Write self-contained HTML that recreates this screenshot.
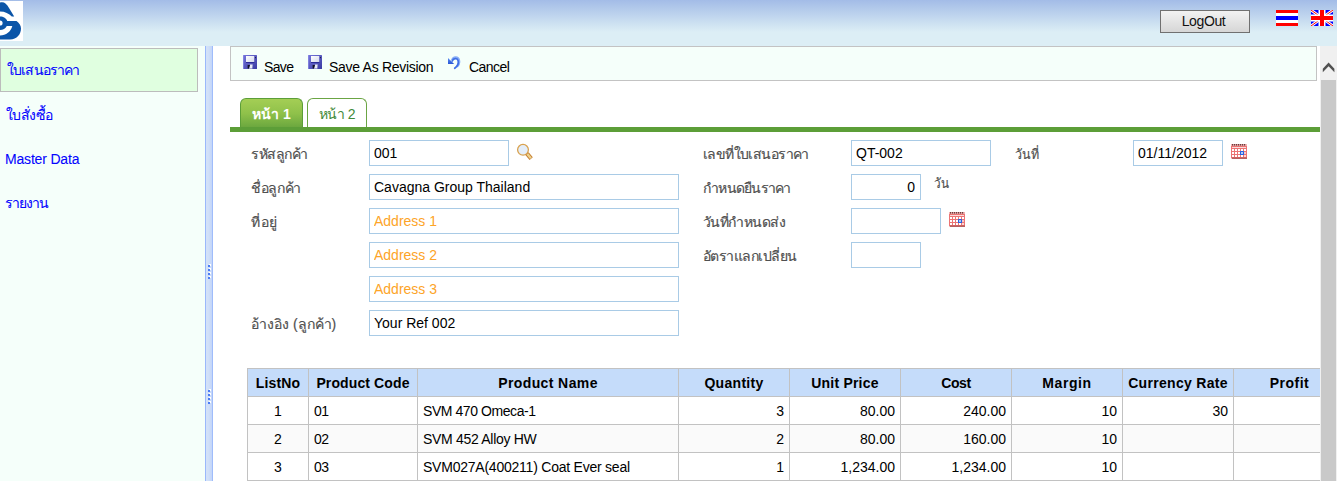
<!DOCTYPE html>
<html lang="th">
<head>
<meta charset="utf-8">
<title>Quotation</title>
<style>
*{box-sizing:border-box;margin:0;padding:0}
html,body{width:1337px;height:481px;overflow:hidden;background:#fff}
body{position:relative;font-family:"Liberation Sans",sans-serif;font-size:14px;color:#000}
.abs{position:absolute}
a{text-decoration:none;display:block}
#hdr{left:0;top:0;width:1337px;height:46px;background:linear-gradient(#a3bce7 0,#dceef5 32px,#dceef5 100%)}
#logo{left:0;top:1px;width:23px;height:40px;background:#fff}
#side{left:0;top:46px;width:205px;height:435px;background:#f5fffa}
.mi{left:0;width:198px;height:44px;line-height:44px;padding-left:6px;color:#0505ff;-webkit-text-stroke:.08px #0505ff;font-size:14px;white-space:nowrap}
.mi.sel{background:#e0ffe0;border:1px solid #bcbcbc;line-height:42px;padding-left:6px}
#split{left:205px;top:46px;width:8px;height:435px;background:linear-gradient(90deg,#9ab8fb 0,#9ab8fb 1px,#d4e2f8 1px,#d0dff8 3.5px,#c2d5f9 7px,#9fbcfb 7px,#9fbcfb 8px)}
.grip{left:208px;width:3px;height:15px}
#tb{left:230px;top:46px;width:1087px;height:35px;background:#f5fffa;border:1px solid #c3c3c3}
.tbt{top:58px;height:18px;line-height:18px;font-size:14px;white-space:nowrap;color:#000}
#btn{left:1160px;top:10px;width:90px;height:23px;padding:0 3px 2px 0;margin:0;border-radius:0;font-family:"Liberation Sans",sans-serif;border:1px solid #707070;background:linear-gradient(#f2f2f2,#d6d6d6);text-align:center;font-size:14px;letter-spacing:-.4px;line-height:20px;color:#111}
#tab1{left:240px;top:98px;width:63px;height:30px;border-radius:6px 6px 0 0;background:linear-gradient(#a4ce55 0,#8fc14a 50%,#69a63e 100%);border:1px solid #5c9e38;border-bottom:0;color:#fff;font-weight:bold;text-align:center;font-size:14px;line-height:30px;white-space:nowrap}
#tab2{left:307px;top:98px;width:60px;height:30px;border-radius:6px 6px 0 0;background:#fff;border:1px solid #6ba544;border-bottom:0;color:#3f8a3a;text-align:center;font-size:14px;line-height:30px;white-space:nowrap}
#gline{left:230px;top:127px;width:1090px;height:5px;background:#5c9e38}
.lbl{height:26px;line-height:29px;font-size:14px;color:#505050;-webkit-text-stroke:.18px #505050;white-space:nowrap}
.inp{height:26px;border:1px solid #a9cbe6;border-radius:0;outline:0;margin:0;background:#fff;font-family:"Liberation Sans",sans-serif;font-size:14px;line-height:normal;padding:0 4px 0 4px;color:#000;-webkit-appearance:none;appearance:none}
.inp::placeholder{color:#fda428;opacity:1}
.r{text-align:right;padding-right:5px}
#grid{left:247px;top:368px;width:1098px;border-collapse:collapse;table-layout:fixed;font-size:14px}
#grid th,#grid td{border:1px solid #c2c2c2;height:28px;padding:0 5px;white-space:nowrap;overflow:hidden}
#grid th{background:#c5dcfa;font-weight:bold;text-align:center;padding:0}
#grid tr.alt td{background:#fafafa}
#grid td.c{text-align:center}
#grid td.k{letter-spacing:-.6px}
#grid td.n{text-align:right}
#sb{left:1320px;top:46px;width:17px;height:435px;background:#f0f0f0}
#thumb{left:1321px;top:80px;width:15px;height:401px;background:#c9c9c9}
</style>
</head>
<body>
<div id="hdr" class="abs"></div>
<div id="logo" class="abs">
<svg width="23" height="40" viewBox="0 1 23 40"><g fill="#0b55a8"><path d="M0,2.6 C3.5,1.4 6.5,3.2 9,8 L14.2,16.6 L11.8,16.6 C9,13.6 5,11.6 0,11.6 Z"/><path d="M0,16.5 C3.5,16.5 6.5,18.5 7.2,21 L16.5,21 C19,22.5 21,25.5 21,28.5 C21,34 17,39.5 10,39.5 L0,39.5 L0,35.5 C6,35.5 11,31.5 12.3,26 L6.8,26 C5.5,28.5 3,30 0,30 Z"/></g><circle cx="0" cy="23" r="2.6" fill="#fff"/></svg>
</div>

<div id="side" class="abs"></div>
<a href="#" id="m1" class="abs mi sel" style="top:48px;letter-spacing:-0.85px">ใบเสนอราคา</a>
<a href="#" id="m2" class="abs mi" style="top:93px;letter-spacing:-0.54px">ใบสั่งซื้อ</a>
<a href="#" id="m3" class="abs mi" style="top:137px;padding-left:5px;letter-spacing:-0.18px">Master Data</a>
<a href="#" id="m4" class="abs mi" style="top:181px;padding-left:5px;letter-spacing:-1.06px">รายงาน</a>

<div id="split" class="abs"></div>
<svg class="abs grip" style="top:264px" viewBox="0 0 3 15"><g fill="#fff"><rect x="1" y="0" width="2" height="2"/><rect x="1" y="4" width="2" height="2"/><rect x="1" y="8" width="2" height="2"/><rect x="1" y="12" width="2" height="2"/></g><g fill="#4a7cf5"><rect x="0" y="1" width="2" height="2"/><rect x="0" y="5" width="2" height="2"/><rect x="0" y="9" width="2" height="2"/><rect x="0" y="13" width="2" height="2"/></g></svg>
<svg class="abs grip" style="top:389px" viewBox="0 0 3 15"><g fill="#fff"><rect x="1" y="0" width="2" height="2"/><rect x="1" y="4" width="2" height="2"/><rect x="1" y="8" width="2" height="2"/><rect x="1" y="12" width="2" height="2"/></g><g fill="#4a7cf5"><rect x="0" y="1" width="2" height="2"/><rect x="0" y="5" width="2" height="2"/><rect x="0" y="9" width="2" height="2"/><rect x="0" y="13" width="2" height="2"/></g></svg>

<button id="btn" class="abs" type="button">LogOut</button>
<svg class="abs" style="left:1276px;top:10px" width="22" height="16" viewBox="0 0 22 16"><rect width="22" height="16" fill="#fff"/><rect width="22" height="3" fill="#f00"/><rect y="6" width="22" height="4" fill="#00f"/><rect y="13" width="22" height="3" fill="#f00"/></svg>
<svg class="abs" style="left:1311px;top:10px" width="22" height="16" viewBox="0 0 22 16"><rect width="22" height="16" fill="#00f"/><path d="M0,0 L22,16 M22,0 L0,16" stroke="#fff" stroke-width="2.7"/><path d="M0,0 L22,16 M22,0 L0,16" stroke="#f00" stroke-width="1"/><path d="M11,0 V16 M0,8 H22" stroke="#fff" stroke-width="7"/><path d="M11,0 V16 M0,8 H22" stroke="#f00" stroke-width="4"/></svg>

<div id="tb" class="abs"></div>
<svg class="abs ico-save" style="left:243px;top:55px" width="14" height="14" viewBox="0 0 14 14"><defs><linearGradient id="fg" x1="0" y1="0" x2="1" y2="1"><stop offset="0" stop-color="#7676dc"/><stop offset="1" stop-color="#3a3aa2"/></linearGradient><linearGradient id="fw" x1="0" y1="0" x2="1" y2="1"><stop offset="0" stop-color="#fff"/><stop offset="1" stop-color="#d4d8ec"/></linearGradient></defs><rect width="14" height="14" rx=".6" fill="url(#fg)"/><rect x="0" y="0" width="1" height="14" fill="#8c8ce6" opacity=".7"/><rect x="3" y="7" width="8.4" height="1" fill="#2c2c98"/><rect x="3" y="1" width="8.2" height="6" fill="url(#fw)"/><rect x="4.2" y="9.2" width="5.8" height="4.8" fill="#5a5ab4"/><polygon points="7,9.6 9.6,9.6 9.2,13.4 6,13.4" fill="#e8eaf6"/><polygon points="4.6,10 7,10 6,13.4 4.6,13.4" fill="#101028"/><rect x="12" y="2" width="1" height="1.2" fill="#22224a"/></svg>
<a href="#" id="t1" class="abs tbt" style="left:264px;letter-spacing:-0.64px">Save</a>
<svg class="abs ico-save" style="left:308px;top:55px" width="14" height="14" viewBox="0 0 14 14"><rect width="14" height="14" rx=".6" fill="url(#fg)"/><rect x="0" y="0" width="1" height="14" fill="#8c8ce6" opacity=".7"/><rect x="3" y="7" width="8.4" height="1" fill="#2c2c98"/><rect x="3" y="1" width="8.2" height="6" fill="url(#fw)"/><rect x="4.2" y="9.2" width="5.8" height="4.8" fill="#5a5ab4"/><polygon points="7,9.6 9.6,9.6 9.2,13.4 6,13.4" fill="#e8eaf6"/><polygon points="4.6,10 7,10 6,13.4 4.6,13.4" fill="#101028"/><rect x="12" y="2" width="1" height="1.2" fill="#22224a"/></svg>
<a href="#" id="t2" class="abs tbt" style="left:329px;letter-spacing:-0.29px">Save As Revision</a>
<svg class="abs" style="left:447px;top:55px" width="14" height="15" viewBox="447 55 14 15"><defs><linearGradient id="ug" x1="0" y1="0" x2="0" y2="1"><stop offset="0" stop-color="#5f8ef2"/><stop offset="1" stop-color="#2857d6"/></linearGradient></defs><polygon points="448,58 448,63.9 454.2,63.9" fill="url(#ug)"/><path d="M452,60.4 C453.2,56.8 458,56.2 459,60.2 C459.7,63 458.6,65.2 457,66.8" fill="none" stroke="#86acf6" stroke-width="2.2"/><path d="M452.2,61 C453.4,58 457.4,57.6 458.1,60.6 C458.9,63.8 457,66.6 454.7,68.3" fill="none" stroke="#3f6fe6" stroke-width="1.7" stroke-linecap="round"/></svg>
<a href="#" id="t3" class="abs tbt" style="left:469px;letter-spacing:-0.54px">Cancel</a>

<a href="#" id="tab1" class="abs">หน้า 1</a>
<a href="#" id="tab2" class="abs" style="letter-spacing:-0.56px">หน้า 2</a>
<div id="gline" class="abs"></div>

<label id="l1" class="abs lbl" style="left:251px;top:140px;letter-spacing:-0.43px">รหัสลูกค้า</label>
<input type="text" class="abs inp" style="left:369px;top:140px;width:140px" value="001">
<svg class="abs" style="left:516px;top:143px" width="17" height="18" viewBox="516 143 17 18"><circle cx="523" cy="149.8" r="5.4" fill="#e4eefa" stroke="#d9a24f" stroke-width="1.3"/><path d="M527,153.6 L531.2,158.6" stroke="#c47a2c" stroke-width="4.2" stroke-linecap="butt"/><path d="M527.3,154 L530.9,158.2" stroke="#ecd28e" stroke-width="2.4"/></svg>

<label id="l2" class="abs lbl" style="left:251px;top:174px;letter-spacing:-0.34px">ชื่อลูกค้า</label>
<input type="text" class="abs inp" style="left:369px;top:174px;width:310px" value="Cavagna Group Thailand">
<label id="l3" class="abs lbl" style="left:251px;top:208px;letter-spacing:0.6px">ที่อยู่</label>
<input type="text" class="abs inp" style="left:369px;top:208px;width:310px" placeholder="Address 1">
<input type="text" class="abs inp" style="left:369px;top:242px;width:310px" placeholder="Address 2">
<input type="text" class="abs inp" style="left:369px;top:276px;width:310px" placeholder="Address 3">
<label id="l6" class="abs lbl" style="left:251px;top:310px">อ้างอิง (ลูกค้า)</label>
<input type="text" class="abs inp" style="left:369px;top:310px;width:310px" value="Your Ref 002">

<label id="r1" class="abs lbl" style="left:703px;top:140px;letter-spacing:-0.59px">เลขที่ใบเสนอราคา</label>
<input type="text" class="abs inp" style="left:851px;top:140px;width:140px" value="QT-002">
<label id="wanti" class="abs lbl" style="left:1015px;top:140px;transform-origin:0 50%;transform:scaleX(.89)">วันที่</label>
<input type="text" class="abs inp" style="left:1133px;top:140px;width:90px" value="01/11/2012">
<svg class="abs cal" style="left:1231px;top:144px" width="16" height="15" viewBox="0 0 16 15"><rect x="0" y="1" width="16" height="13.4" fill="#ec7474"/><rect x="1" y="13.6" width="15" height="1.2" fill="#a54a4a"/><rect x="0" y="0" width="16" height="2" fill="#f3b1b1"/><g fill="#6b3c3c"><rect x="1" y="0" width="1.2" height="1.6"/><rect x="3" y="0" width="1.2" height="1.6"/><rect x="5" y="0" width="1.2" height="1.6"/><rect x="7" y="0" width="1.2" height="1.6"/><rect x="9" y="0" width="1.2" height="1.6"/><rect x="11" y="0" width="1.2" height="1.6"/><rect x="13" y="0" width="1.2" height="1.6"/></g><rect x="1" y="3" width="14" height="1" fill="#fbdcdc"/><g fill="#fff"><rect x="1" y="5" width="2" height="2"/><rect x="4" y="5" width="2" height="2"/><rect x="7" y="5" width="2" height="2"/><rect x="10" y="5" width="2" height="2"/><rect x="13" y="5" width="2" height="2"/><rect x="1" y="8" width="2" height="2"/><rect x="4" y="8" width="2" height="2"/><rect x="7" y="8" width="2" height="2"/><rect x="13" y="8" width="2" height="2" opacity=".6"/><rect x="1" y="11" width="2" height="2"/><rect x="4" y="11" width="2" height="2"/><rect x="7" y="11" width="2" height="2"/><rect x="10" y="11" width="2" height="2"/><rect x="13" y="11" width="2" height="2" opacity=".7"/></g><rect x="9" y="7" width="4" height="4" rx=".6" fill="#2463e4"/><rect x="10.2" y="8.2" width="1.6" height="1.6" fill="#fff"/></svg>

<label id="r2" class="abs lbl" style="left:703px;top:174px;letter-spacing:-0.73px">กำหนดยืนราคา</label>
<input type="text" class="abs inp r" style="left:851px;top:174px;width:70px" value="0">
<label id="wan" class="abs lbl" style="left:934px;top:169px;transform-origin:0 50%;transform:scaleX(.84)">วัน</label>
<label id="r3" class="abs lbl" style="left:703px;top:208px;letter-spacing:-0.56px">วันที่กำหนดส่ง</label>
<input type="text" class="abs inp" style="left:851px;top:208px;width:90px" value="">
<svg class="abs cal" style="left:949px;top:212px" width="16" height="15" viewBox="0 0 16 15"><rect x="0" y="1" width="16" height="13.4" fill="#ec7474"/><rect x="1" y="13.6" width="15" height="1.2" fill="#a54a4a"/><rect x="0" y="0" width="16" height="2" fill="#f3b1b1"/><g fill="#6b3c3c"><rect x="1" y="0" width="1.2" height="1.6"/><rect x="3" y="0" width="1.2" height="1.6"/><rect x="5" y="0" width="1.2" height="1.6"/><rect x="7" y="0" width="1.2" height="1.6"/><rect x="9" y="0" width="1.2" height="1.6"/><rect x="11" y="0" width="1.2" height="1.6"/><rect x="13" y="0" width="1.2" height="1.6"/></g><rect x="1" y="3" width="14" height="1" fill="#fbdcdc"/><g fill="#fff"><rect x="1" y="5" width="2" height="2"/><rect x="4" y="5" width="2" height="2"/><rect x="7" y="5" width="2" height="2"/><rect x="10" y="5" width="2" height="2"/><rect x="13" y="5" width="2" height="2"/><rect x="1" y="8" width="2" height="2"/><rect x="4" y="8" width="2" height="2"/><rect x="7" y="8" width="2" height="2"/><rect x="13" y="8" width="2" height="2" opacity=".6"/><rect x="1" y="11" width="2" height="2"/><rect x="4" y="11" width="2" height="2"/><rect x="7" y="11" width="2" height="2"/><rect x="10" y="11" width="2" height="2"/><rect x="13" y="11" width="2" height="2" opacity=".7"/></g><rect x="9" y="7" width="4" height="4" rx=".6" fill="#2463e4"/><rect x="10.2" y="8.2" width="1.6" height="1.6" fill="#fff"/></svg>
<label id="r4" class="abs lbl" style="left:703px;top:242px;letter-spacing:-0.54px">อัตราแลกเปลี่ยน</label>
<input type="text" class="abs inp" style="left:851px;top:242px;width:70px" value="">

<table id="grid" class="abs">
<colgroup><col style="width:61px"><col style="width:109px"><col style="width:261px"><col style="width:111px"><col style="width:111px"><col style="width:111px"><col style="width:111px"><col style="width:111px"><col style="width:112px"></colgroup>
<tr><th><span id="h1" style="letter-spacing:0.18px">ListNo</span></th><th><span id="h2" style="letter-spacing:0.12px">Product Code</span></th><th><span id="h3" style="letter-spacing:0.4px">Product Name</span></th><th><span id="h4" style="letter-spacing:0.29px">Quantity</span></th><th><span id="h5" style="letter-spacing:0.2px">Unit Price</span></th><th><span id="h6" style="letter-spacing:-0.43px">Cost</span></th><th><span id="h7" style="letter-spacing:0.61px">Margin</span></th><th><span id="h8" style="letter-spacing:0.31px">Currency Rate</span></th><th><span id="h9" style="letter-spacing:0.48px">Profit</span></th></tr>
<tr><td class="c">1</td><td class="k">01</td><td><span id="p1" style="letter-spacing:-0.43px">SVM 470 Omeca-1</span></td><td class="n">3</td><td class="n">80.00</td><td class="n">240.00</td><td class="n">10</td><td class="n">30</td><td></td></tr>
<tr class="alt"><td class="c">2</td><td class="k">02</td><td><span id="p2" style="letter-spacing:-0.3px">SVM 452 Alloy HW</span></td><td class="n">2</td><td class="n">80.00</td><td class="n">160.00</td><td class="n">10</td><td></td><td></td></tr>
<tr><td class="c">3</td><td class="k">03</td><td><span id="p3" style="letter-spacing:-0.23px">SVM027A(400211) Coat Ever seal</span></td><td class="n">1</td><td class="n">1,234.00</td><td class="n">1,234.00</td><td class="n">10</td><td></td><td></td></tr>
<tr class="alt"><td class="c">&nbsp;</td><td></td><td></td><td></td><td></td><td></td><td></td><td></td><td></td></tr>
</table>

<div id="sb" class="abs"></div>
<svg class="abs" style="left:1320px;top:58px" width="17" height="18" viewBox="1320 58 17 18"><polygon points="1322.8,68.8 1328.6,62.6 1334.4,68.8 1334.4,72.2 1328.6,66.2 1322.8,72.2" fill="#505050"/></svg>
<div id="thumb" class="abs"></div>
</body>
</html>
